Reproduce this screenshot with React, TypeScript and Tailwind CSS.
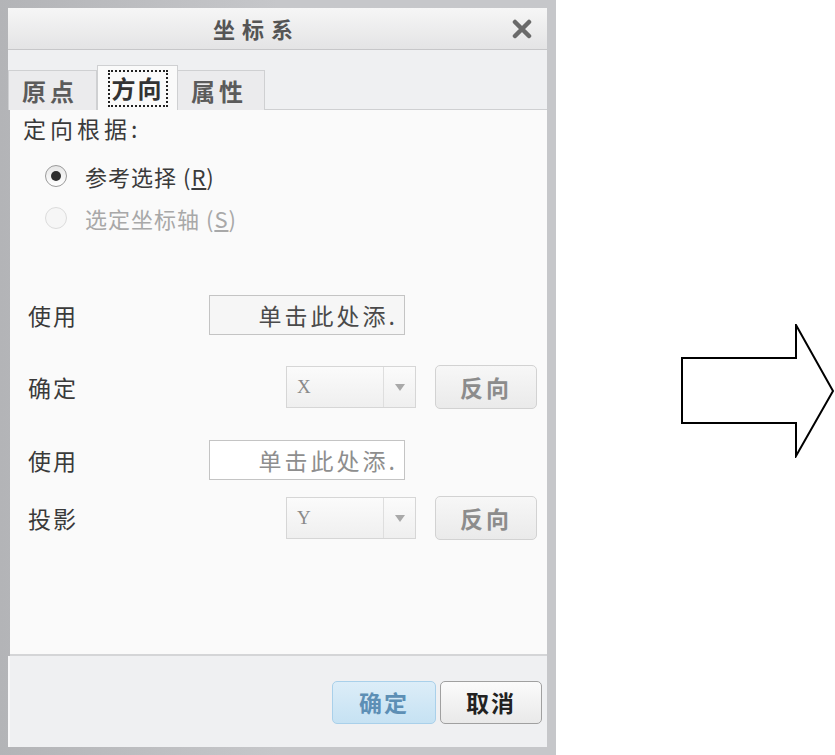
import React from "react";

const cjk = { fontFamily: '"Noto Sans CJK SC", "Noto Sans", sans-serif' };

function Radio({ checked, disabled }: { checked?: boolean; disabled?: boolean }) {
  return (
    <div
      className={`w-[22px] h-[22px] rounded-full border flex items-center justify-center ${
        disabled ? "border-[#dcdcdc] bg-[#f6f6f6]" : "border-[#9a9a9a] bg-gradient-to-b from-[#e6e6e6] to-[#ffffff]"
      }`}
    >
      {checked && <div className="w-[10px] h-[10px] rounded-full bg-[#2e2e2e]" />}
    </div>
  );
}

function Select({ value }: { value: string }) {
  return (
    <div className="w-[130px] h-[42px] border border-[#d6d6d6] bg-gradient-to-b from-[#fbfbfb] to-[#efefef] flex items-stretch">
      <div className="flex-1 flex items-center pl-[10px] text-[19px] text-[#8a8a8a]" style={{ fontFamily: '"Liberation Serif", serif' }}>
        {value}
      </div>
      <div className="w-[32px] border-l border-[#dedede] flex items-center justify-center">
        <svg width="10" height="7" viewBox="0 0 10 7">
          <polygon points="0,0 10,0 5,7" fill="#a9a9a9" />
        </svg>
      </div>
    </div>
  );
}

function FlipButton() {
  return (
    <div className="w-[102px] h-[44px] rounded-[5px] border border-[#d2d2d2] bg-gradient-to-b from-[#f7f7f7] to-[#eaeaea] flex items-center justify-center text-[23px] font-bold tracking-[3px] text-[#8c8c8c]" style={cjk}>
      反向
    </div>
  );
}

function InputBox({ active }: { active?: boolean }) {
  return (
    <div
      className={`w-[196px] h-[40px] border border-[#c4c4c4] flex items-center justify-end pr-[6px] text-[23px] tracking-[3px] ${
        active ? "bg-[#f6f6f6] text-[#4a4a4a]" : "bg-white text-[#8e8e8e]"
      }`}
      style={cjk}
    >
      单击此处添.
    </div>
  );
}

export default function App() {
  return (
    <div className="w-[835px] h-[755px] bg-white flex" style={cjk}>
      {/* Dialog */}
      <div className="w-[557px] h-[755px] bg-gradient-to-r from-[#b3b4b7] via-[#c6c7ca] to-[#c6c7ca] pt-[8px] pl-[8px] pr-[9px] pb-[8px] flex flex-col">
        {/* Title bar */}
        <div className="h-[42px] bg-gradient-to-b from-[#f6f6f6] to-[#e4e4e5] flex items-center border-b border-[#c7c7c9]">
          <div className="pl-[205px] text-[22px] font-bold tracking-[7px] text-[#555]">坐标系</div>
          <div className="ml-auto pr-[15px] flex items-center">
            <svg width="20" height="20" viewBox="0 0 20 20">
              <path d="M3 3 L17 17 M17 3 L3 17" stroke="#6a6a6a" strokeWidth="4.5" strokeLinecap="round" />
            </svg>
          </div>
        </div>
        {/* Tab strip */}
        <div className="h-[60px] bg-[#eff0f2] flex items-end">
          <div className="w-[89px] h-[40px] border border-b-0 border-[#cfd0d2] bg-[#ebebed] flex items-center pl-[13px] text-[24px] font-bold tracking-[4px] text-[#5b5b5b]">
            原点
          </div>
          <div className="w-[81px] h-[45px] border border-b-0 border-[#cfd0d2] bg-[#fafafa] flex items-center justify-center">
            <div className="border-2 border-dotted border-[#222] px-[2px] h-[37px] flex items-center text-[24px] font-bold tracking-[2px] text-[#333]">
              方向
            </div>
          </div>
          <div className="w-[87px] h-[40px] border border-b-0 border-l-0 border-[#cfd0d2] bg-[#ebebed] flex items-center pl-[13px] text-[24px] font-bold tracking-[4px] text-[#5b5b5b]">
            属性
          </div>
          <div className="flex-1 border-b border-[#cfd0d2]" />
        </div>
        {/* Content */}
        <div className="h-[546px] bg-[#fafafa] mx-[2px] mr-0 border-b-2 border-[#d4d5d7] flex flex-col">
          <div className="pt-[6px] pl-[13px] h-[30px] flex items-center text-[23px] tracking-[4px] text-[#3a3a3a] leading-[24px]">
            定向根据:
          </div>
          <div className="mt-[15px] h-[42px] pl-[35px] flex items-center gap-[18px]">
            <Radio checked />
            <span className="text-[22px] tracking-[1px] text-[#3a3a3a]">
              参考选择 (<span className="underline">R</span>)
            </span>
          </div>
          <div className="h-[42px] pl-[35px] flex items-center gap-[18px]">
            <Radio disabled />
            <span className="text-[22px] tracking-[1px] text-[#a8a8a8]">
              选定坐标轴 (<span className="underline">S</span>)
            </span>
          </div>

          <div className="mt-[56px] h-[40px] pl-[18px] flex items-center">
            <div className="w-[181px] text-[23px] tracking-[2px] text-[#3a3a3a]">使用</div>
            <InputBox active />
          </div>
          <div className="mt-[30px] h-[44px] pl-[18px] flex items-center">
            <div className="w-[258px] text-[23px] tracking-[2px] text-[#3a3a3a]">确定</div>
            <Select value="X" />
            <div className="ml-[19px]">
              <FlipButton />
            </div>
          </div>
          <div className="mt-[31px] h-[40px] pl-[18px] flex items-center">
            <div className="w-[181px] text-[23px] tracking-[2px] text-[#3a3a3a]">使用</div>
            <InputBox />
          </div>
          <div className="mt-[16px] h-[44px] pl-[18px] flex items-center">
            <div className="w-[258px] text-[23px] tracking-[2px] text-[#3a3a3a]">投影</div>
            <Select value="Y" />
            <div className="ml-[19px]">
              <FlipButton />
            </div>
          </div>
        </div>
        {/* Bottom bar */}
        <div className="flex-1 bg-[#eff0f2] border-l-2 border-[#f8f8f9] flex items-start justify-end pt-[25px] pr-[5px] gap-[4px]">
          <div className="w-[104px] h-[43px] rounded-[5px] border border-[#a9d0ea] bg-gradient-to-b from-[#dcedf8] to-[#c6e2f3] flex items-center justify-center text-[23px] font-bold tracking-[2px] text-[#5d8fb5]">
            确定
          </div>
          <div className="w-[102px] h-[43px] rounded-[5px] border border-[#a0a0a0] bg-gradient-to-b from-[#fbfbfb] to-[#e9e9e9] flex items-center justify-center text-[23px] font-bold tracking-[2px] text-[#222]">
            取消
          </div>
        </div>
      </div>
      {/* Arrow */}
      <div className="flex-1 pl-[125px] pt-[324px]">
        <svg width="154" height="134" viewBox="0 0 154 134">
          <polygon points="1,34 115,34 115,1 152,67 115,132 115,99 1,99" fill="white" stroke="#000" strokeWidth="2" strokeLinejoin="miter" />
        </svg>
      </div>
    </div>
  );
}
